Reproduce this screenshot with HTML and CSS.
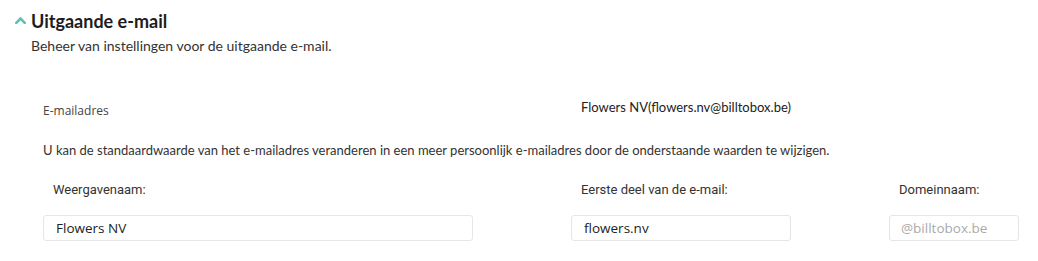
FILE: index.html
```html
<!DOCTYPE html>
<html lang="nl">
<head>
  <meta charset="UTF-8" />
  <meta name="viewport" content="width=device-width, initial-scale=1.0"/>
  <title>Uitgaande e-mail</title>
  <link rel="stylesheet" href="styles.css">
</head>
<body>

<section class="panel">
  <h2 class="panel-title">
    <svg class="chevron" width="11" height="8" viewBox="0 0 11 8"><path d="M1.3 6.8 L5.5 2.6 L9.7 6.8" fill="none" stroke="#5cbfb3" stroke-width="2.6" stroke-linecap="round"/></svg>
    Uitgaande e-mail
  </h2>
  <p class="panel-sub">Beheer van instellingen voor de uitgaande e-mail.</p>

  <div class="form-grid">
    <div class="field-name">E-mailadres</div>
    <div class="field-value">Flowers NV(flowers.nv@billtobox.be)</div>
    <div></div>

    <p class="note">U kan de standaardwaarde van het e-mailadres veranderen in een meer persoonlijk e-mailadres door de onderstaande waarden te wijzigen.</p>

    <label class="lbl" for="display-name">Weergavenaam:</label>
    <label class="lbl" for="local-part">Eerste deel van de e-mail:</label>
    <label class="lbl" for="domain">Domeinnaam:</label>

    <input id="display-name" class="inp inp-wide" type="text" value="Flowers NV">
    <input id="local-part" class="inp inp-mid" type="text" value="flowers.nv">
    <input id="domain" class="inp inp-small" type="text" placeholder="@billtobox.be" disabled>
  </div>
</section>

</body>
</html>
```

FILE: styles.css
```css
body {
  margin: 0;
  background-color: #fff;
  font-family: Lato, "Open Sans", sans-serif;
  color: #333;
}

.panel {
  padding: 9px 0 0 15px;
}

.panel-title {
  display: flex;
  align-items: center;
  gap: 5px;
  margin: 0;
  font-size: 18px;
  font-weight: 700;
  color: #1d1d1d;
  line-height: 24px;
}

.chevron {
  margin-top: -2px;
}

.panel-sub {
  margin: 3px 0 0 16px;
  font-size: 14px;
  line-height: 20px;
  color: #333;
}

.form-grid {
  display: grid;
  grid-template-columns: 528px 318px 130px;
  margin: 43px 0 0 28px;
}

.field-name {
  font-family: "Open Sans", sans-serif;
  font-size: 12px;
  color: #444;
  padding-top: 3px;
}

.field-value {
  padding-left: 10px;
  font-size: 13px;
  color: #222;
}

.note {
  grid-column: 1 / -1;
  margin: 22px 0 0;
  font-size: 13px;
  line-height: 18px;
  color: #333;
}

.lbl {
  padding: 23px 0 0 10px;
  font-family: Roboto, sans-serif;
  font-size: 13px;
  color: #333;
}

.inp {
  box-sizing: border-box;
  height: 26px;
  margin-top: 18px;
  padding: 0 12px;
  border: 1px solid #e6e6e6;
  border-radius: 3px;
  background: #fff;
  font-family: "Open Sans", sans-serif;
  font-size: 13.5px;
  color: #222;
}

.inp-wide { width: 430px; }
.inp-mid { width: 220px; }
.inp-small { width: 130px; padding-left: 11px; }

.inp::placeholder {
  color: #aaa;
}
```
